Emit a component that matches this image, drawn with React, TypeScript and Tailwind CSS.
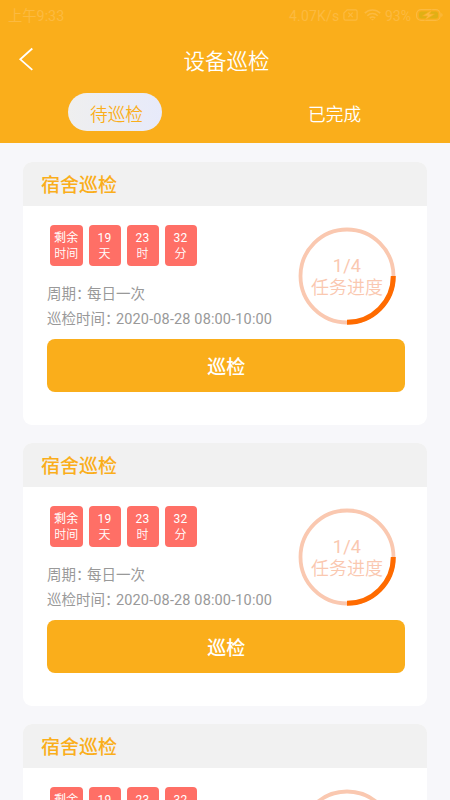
import React from 'react';

const chips = [
  { top: '剩余', bottom: '时间', size: 'w-[33.5px] mr-[5.5px]' },
  { top: '19', bottom: '天', size: 'w-[32px] mr-[6px]' },
  { top: '23', bottom: '时', size: 'w-[32px] mr-[6px]' },
  { top: '32', bottom: '分', size: 'w-[32px]' },
];

function StatusBar() {
  return (
    <div className="flex h-[30px] items-center justify-between pl-[8px] pr-[6px] text-[#fcba40]">
      <span className="pt-[1px] text-[14.3px] leading-[30px]">上午9:33</span>
      <div className="flex items-center text-[14px] leading-[30px]">
        <span className="mr-[-1px] w-[51px] pt-px tracking-[0.2px]">4.07K/s</span>
        <svg className="ml-[4px]" width="15" height="12" viewBox="0 0 15 12" fill="none" stroke="currentColor" strokeWidth="1.2">
          <path d="M4.2 .8H12.5a1.6 1.6 0 0 1 1.6 1.6V9.6a1.6 1.6 0 0 1-1.6 1.6H2.5A1.6 1.6 0 0 1 .9 9.6V4z" />
          <path d="M5.3 3.7l4.4 4.4M9.7 3.7L5.3 8.1" />
        </svg>
        <svg className="ml-[6px]" width="17" height="12" viewBox="0 0 17 12" fill="none" stroke="currentColor" strokeWidth="1.6">
          <path d="M.8 4.1a11 11 0 0 1 15.4 0M3.3 6.7a7.4 7.4 0 0 1 10.4 0M5.8 9.1a3.9 3.9 0 0 1 5.4 0" />
          <path d="M7 10l1.5 1.5L10 10z" fill="currentColor" stroke="none" />
        </svg>
        <span className="ml-[4px] w-[28px] pt-px">93%</span>
        <svg className="ml-[3px] mr-px" width="27" height="12" viewBox="0 0 27 12">
          <rect x=".6" y=".6" width="23.5" height="10.8" rx="4.5" fill="none" stroke="currentColor" strokeWidth="1.2" />
          <path d="M25.3 4v4q1.3-.5 1.3-2t-1.3-2" fill="currentColor" />
          <rect x="3" y="2.4" width="19" height="7.2" rx="2.5" fill="#dfb015" />
          <path d="M16 .8L6.5 6.9h5L8.8 11.2l9.7-6.1h-5z" fill="#fcba40" stroke="#faae1b" strokeWidth=".7" />
        </svg>
      </div>
    </div>
  );
}

function ProgressRing() {
  return (
    <div className="grid h-[98px] w-[98px] place-items-center text-[18px] leading-[21px] text-[#fac8b0]">
      <svg className="col-start-1 row-start-1" width="98" height="98" viewBox="0 0 98 98" fill="none">
        <circle cx="49" cy="49" r="46.5" stroke="#fac8b0" strokeWidth="3.8" />
        <path d="M95.3 49A46.3 46.3 0 0 1 49 95.3" stroke="#ff6b00" strokeWidth="5" />
      </svg>
      <div className="col-start-1 row-start-1 pt-[3px] text-center">
        <div className="tracking-[0.3px]">1/4</div>
        <div className="font-[350] leading-[23px]">任务进度</div>
      </div>
    </div>
  );
}

function InspectionCard() {
  return (
    <section className="h-[263px] shrink-0 overflow-hidden rounded-[9px] bg-white">
      <h2 className="h-[44px] bg-[#f1f1f1] pl-[18px] text-[19px] font-medium leading-[47px] text-[#faae1b]">宿舍巡检</h2>
      <div className="flex h-[133.3px] justify-between pl-[24px] pr-[31px]">
        <div>
          <div className="flex pl-[2.5px] pt-[19px]">
            {chips.map((c) => (
              <div key={c.top} className={`h-[41.5px] rounded-[4px] bg-[#ff6f66] pt-[5px] text-center text-[12px] leading-[16px] text-white ${c.size}`}>
                <div className="tracking-[0.2px]">{c.top}</div>
                <div className="font-[350]">{c.bottom}</div>
              </div>
            ))}
          </div>
          <div className="whitespace-nowrap pt-[16px] text-[14.5px] leading-[25px] text-[#999]">
            <div>周期<span className="-mr-[3.5px]">：</span>每日一次</div>
            <div>巡检时间<span className="-mr-[3.5px]">：</span><span className="tracking-[0.14px]">2020-08-28 08:00-10:00</span></div>
          </div>
        </div>
        <div className="-ml-[20px] pt-[21px]">
          <ProgressRing />
        </div>
      </div>
      <button className="ml-[24px] block h-[53px] w-[358.4px] rounded-[8px] bg-[#faae1b] text-[19px] font-medium leading-[57px] text-white">巡检</button>
    </section>
  );
}

export default function App() {
  return (
    <main className="flex h-[800px] w-[450px] flex-col overflow-hidden bg-[#f7f7fa] font-[Roboto,'Noto_Sans_CJK_SC',sans-serif]">
      <header className="h-[143px] shrink-0 bg-[#faae1b]">
        <StatusBar />
        <div className="grid h-[63px] grid-cols-[60px_1fr_60px] items-center">
          <svg className="ml-[18px] -mt-[6px]" width="16" height="24" viewBox="0 0 16 24" fill="none" stroke="white" strokeWidth="1.8">
            <path d="M14.3 1.5L2.3 12.3l12 10.6" />
          </svg>
          <h1 className="pl-[3px] text-center text-[21.5px] font-[350] leading-[64px] text-white">设备巡检</h1>
        </div>
        <nav className="flex text-[17.7px] font-[350] leading-[45px]">
          <div className="ml-[68px] h-[38px] w-[94px] rounded-full bg-linear-to-r from-[#efefef] to-[#e7eafa] pl-[3px] text-center text-[#faae1b]">待巡检</div>
          <div className="ml-[146px] text-white">已完成</div>
        </nav>
      </header>
      <div className="flex min-h-0 flex-1 flex-col gap-[18.3px] overflow-hidden pl-[23px] pr-[23px] pt-[18.6px]">
        <InspectionCard />
        <InspectionCard />
        <InspectionCard />
      </div>
    </main>
  );
}
